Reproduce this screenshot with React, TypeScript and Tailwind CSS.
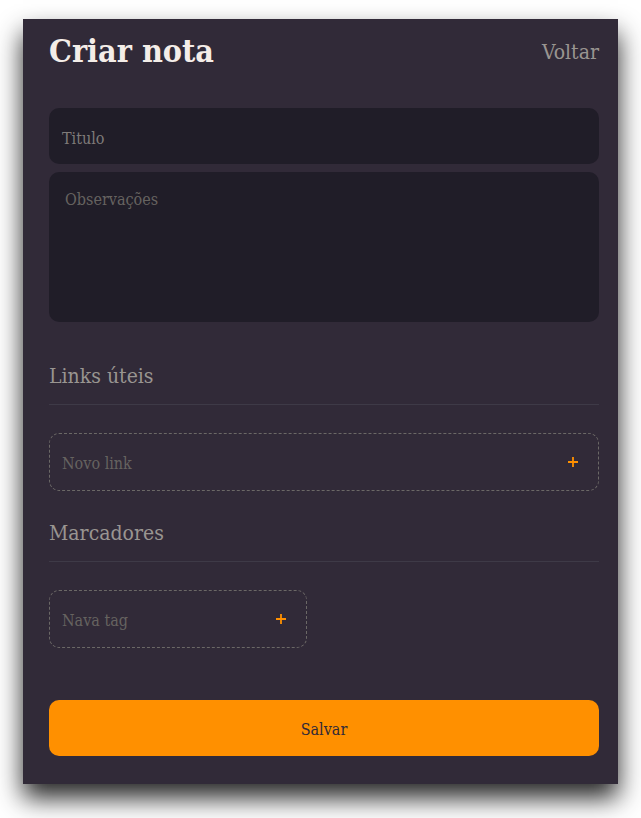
const font = "font-['DejaVu_Serif_Condensed','DejaVu_Serif',serif]"

function PlusIcon() {
  return (
    <svg width="12" height="12" viewBox="0 0 12 12" className="shrink-0">
      <path d="M1 6h10M6 1v10" stroke="#ff9000" strokeWidth="1.8" />
    </svg>
  )
}

function Section({ title, className, children }: { title: string; className: string; children: React.ReactNode }) {
  return (
    <section className={className}>
      <h2 className="text-[21px] leading-[28px] text-[#999591] pb-[14px] border-b border-[#3e3a47]">{title}</h2>
      <div className="mt-[28px] flex">{children}</div>
    </section>
  )
}

function NewItem({ placeholder, width }: { placeholder: string; width: string }) {
  return (
    <div className={`${width} h-[58px] flex items-center border border-dashed border-[#6b6866] rounded-[10px] pl-[12px] pr-[19px]`}>
      <span className="flex-1 text-[16px] text-[#666360] pt-[4px]">{placeholder}</span>
      <PlusIcon />
    </div>
  )
}

export default function App() {
  return (
    <div className={`min-h-screen bg-white pt-[19px] pl-[23px] ${font}`}>
      <div className="w-[595px] h-[765px] bg-[#312a38] shadow-[0_14px_24px_rgba(0,0,0,0.85)] pl-[26px] pr-[19px] flex flex-col">
        <header className="h-[64px] flex items-center justify-between">
          <h1 className="text-[32px] font-bold text-[#f4ede8] leading-none">Criar nota</h1>
          <a className="text-[21px] text-[#999591] pt-[4px]">Voltar</a>
        </header>

        <div className="mt-[25px] h-[56px] rounded-[10px] bg-[#201d28] flex items-center px-[13px]">
          <span className="text-[16px] text-[#7f7b79] pt-[5px]">Titulo</span>
        </div>
        <div className="mt-[8px] h-[150px] rounded-[10px] bg-[#201d28] p-[16px]">
          <span className="text-[16px] text-[#666360]">Observações</span>
        </div>

        <Section title="Links úteis" className="mt-[40px]">
          <NewItem placeholder="Novo link" width="w-full" />
        </Section>

        <Section title="Marcadores" className="mt-[28px]">
          <NewItem placeholder="Nava tag" width="w-[258px]" />
        </Section>

        <button className="mt-[52px] h-[56px] rounded-[10px] bg-[#ff9000] text-[16px] text-[#312a38] pt-[4px]">Salvar</button>
      </div>
    </div>
  )
}
